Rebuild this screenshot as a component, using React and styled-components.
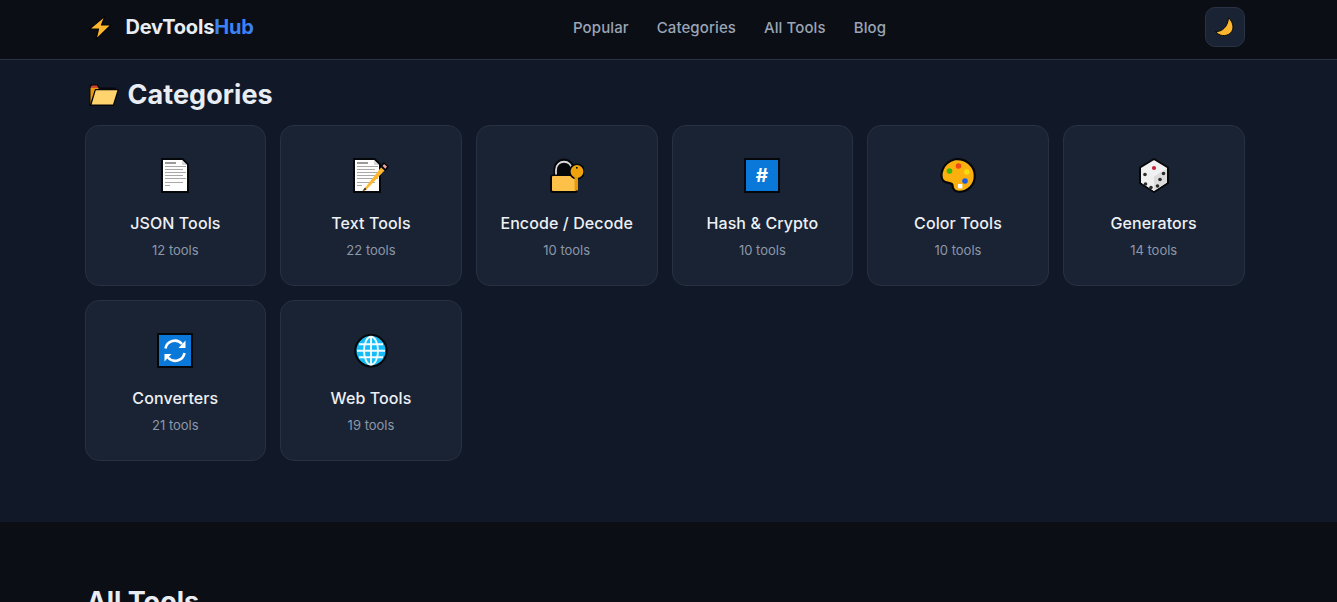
import React from "react";
import styled, { createGlobalStyle } from "styled-components";

const Global = createGlobalStyle`
  html, body { margin: 0; padding: 0; background: #0b0e15; height: 602px; overflow: hidden; }
  body { font-family: Inter, "Noto Sans", sans-serif; color: #e8ecf3; }
  * { box-sizing: border-box; }
`;
const Header = styled.header`
  height: 60px;
  padding-right: 8px;
  background: #0b0e15;
  border-bottom: 1px solid #2a3344;
`;
const Container = styled.div`
  max-width: 1192px;
  margin: 0 auto;
  padding: 0 16px;
`;
const Bar = styled(Container)`
  height: 54px;
  display: flex;
  align-items: center;
  justify-content: space-between;
`;
const Logo = styled.a`
  display: flex;
  align-items: center;
  gap: 14px;
  font-size: 20px;
  font-weight: 700;
  letter-spacing: -0.2px;
  color: #e8ecf3;
  padding-left: 3px;
`;
const Accent = styled.span`
  color: #3b82f6;
`;
const Nav = styled.nav`
  display: flex;
  gap: 28px;
  padding-left: 1px;
  font-size: 15px;
  font-weight: 500;
  letter-spacing: 0.1px;
  color: #9aa5b5;
`;
const ThemeButton = styled.button`
  width: 40px;
  height: 40px;
  border-radius: 10px;
  border: 1px solid #2a3344;
  background: #1a2333;
  padding: 0;
  display: flex;
  align-items: center;
  justify-content: center;
`;
const Section = styled.section`
  background: #111827;
  height: 462px;
  padding: 16px 8px 0 0;
`;
const Title = styled.h2`
  margin: 0 0 11px;
  font-size: 27px;
  line-height: 38px;
  font-weight: 700;
  letter-spacing: 0.05px;
  color: #e8ecf3;
  display: flex;
  align-items: center;
  gap: 9px;
  padding-left: 4px;
`;
const Grid = styled.div`
  display: grid;
  grid-template-columns: repeat(6, 1fr);
  gap: 14px;
`;
const Card = styled.a`
  height: 161px;
  background: #1a2333;
  border: 1px solid #273142;
  border-radius: 14px;
  display: flex;
  flex-direction: column;
  align-items: center;
  padding-top: 32px;
`;
const CardIcon = styled.div`
  height: 35px;
  display: flex;
  align-items: flex-start;
  justify-content: center;
`;
const CardName = styled.div`
  margin-top: 18px;
  font-size: 16px;
  font-weight: 500;
  letter-spacing: 0.1px;
  line-height: 24px;
  color: #edf0f5;
`;
const CardCount = styled.div`
  margin-top: 5px;
  font-size: 13px;
  line-height: 20px;
  color: #8c98aa;
`;
const Tools = styled.section`
  padding: 64px 8px 0 0;
`;
const ToolsTitle = styled.h2`
  margin: 0;
  padding-left: 2px;
  font-size: 27px;
  line-height: 32px;
  font-weight: 700;
  color: #e8ecf3;
`;

const K = "#05070b";
const Svg = ({ w, h, children }) => (
  <svg width={w} height={h} viewBox={`0 0 ${w} ${h}`} style={{ display: "block" }}>
    {children}
  </svg>
);

const Bolt = () => (
  <Svg w={24} h={25}>
    <path d="M17 1 L1.5 14 H10.5 L8 24.5 L23 10 H13.5 Z" fill="#fdb72e" stroke={K} strokeWidth="1.2" strokeLinejoin="round" />
  </Svg>
);
const Folder = () => (
  <Svg w={30} h={22}>
    <path d="M0.5 21.5 V2.5 Q0.5 0.5 2.5 0.5 H8.5 L10.5 3.5 H27 V6 H9 L5 21.5 Z" fill={K} />
    <path d="M1.5 20.5 V4 H9.5 V6 H6 L3 20.5 Z" fill="#e89a0c" />
    <path d="M1.5 4 Q1.5 1.5 3.5 1.5 H8 L9.5 4 Z" fill="#d0472a" />
    <path d="M6 5 H30 L24.8 22 H0.5 Z" fill={K} />
    <path d="M6.8 6.2 H28.4 L24 20.6 H2.6 Z" fill="#ffd36e" />
  </Svg>
);
const Moon = () => (
  <Svg w={19} h={20}>
    <path d="M13.5 0.8 C18.6 5.5 19.4 12 15.6 16 C11 20 3.8 19.2 0.6 14.4 C7 15 12.8 10 13.5 0.8 Z" fill="#fdb72e" stroke={K} strokeWidth="1" strokeLinejoin="round" />
  </Svg>
);
const lineRows = [8, 11, 14, 17, 20, 24, 27];
const Lines = () => (
  <>
    <rect x={4} y={4} width={11} height={2} fill="#9a9a9a" />
    {lineRows.map((y, i) => (
      <rect key={y} x={4} y={y} width={i === 6 ? 5 : i % 2 ? 18 : 21} height={1} fill="#a8a8a8" />
    ))}
  </>
);
const Page = ({ pencil }) => (
  <Svg w={pencil ? 36 : 28} h={35}>
    <path d="M0 0 H22 L28 6 V35 H0 Z" fill={K} />
    <path d="M2 2 H21 L26 7 V33 H2 Z" fill="#fdfdfd" />
    <path d="M21 2 L26 7 H21 Z" fill="#d9d9d9" />
    <Lines />
    {pencil && (
      <>
        <path d="M9.5 33 L28 9.5 L31.5 12.5 L12 33 Z" fill="#fdb72e" />
        <path d="M9.5 33 L12 29.5 L13.5 31.5 Z" fill="#333" />
        <path d="M28.5 8 L31 5 L35 8.5 L32.5 12 Z" fill="#e9a3a0" stroke={K} strokeWidth="1.5" />
      </>
    )}
  </Svg>
);
const Lock = () => (
  <Svg w={34} h={35}>
    <path d="M3.5 19 V12 C3.5 -3.5 24.5 -3.5 24.5 12 V19 Z" fill={K} />
    <path d="M6 19 V12 C6 1 22 1 22 12" fill="none" stroke="#d9d9d9" strokeWidth="1.8" />
    <rect x="0" y="16.5" width="28" height="18.5" rx="3" fill={K} />
    <rect x="2" y="18" width="24" height="15" rx="1" fill="#fdc048" />
    <circle cx="27" cy="13.5" r="7.2" fill="#efa20c" stroke={K} strokeWidth="1.6" />
    <rect x="24.6" y="19" width="3.4" height="13.5" fill="#e59a0a" />
    <rect x="26" y="9" width="1.6" height="1.6" fill={K} />
  </Svg>
);
const HashText = styled.text`
  font-family: Inter, sans-serif;
  font-size: 19px;
  font-weight: 700;
  fill: #fff;
`;
const Hash = () => (
  <Svg w={36} h={35}>
    <rect width="36" height="35" fill={K} />
    <rect x="2" y="2" width="32" height="31" fill="#0a78d8" />
    <HashText x="18" y="24" textAnchor="middle">#</HashText>
  </Svg>
);
const Palette = () => (
  <Svg w={36} h={35}>
    <path d="M15 1.2 C26 0 34.8 8 34.8 18 C34.8 27 28 33.8 19 33.8 C14 33.8 12.5 30 12.5 27 C11.5 24 6 26 3 22.5 C0 18 1 5 15 1.2 Z" fill="#fbb00e" stroke={K} strokeWidth="2.2" strokeLinejoin="round" />
    <circle cx="9.5" cy="13" r="2.8" fill="#38b80f" />
    <circle cx="18.5" cy="8" r="2.8" fill="#ee4a18" />
    <circle cx="26.8" cy="14" r="2.8" fill="#f6dc10" />
    <circle cx="25" cy="23" r="2.8" fill="#1a5ce8" />
    <rect x="18" y="26" width="4.4" height="4.4" fill="#fff" />
  </Svg>
);
const Dice = () => (
  <Svg w={30} h={35}>
    <path d="M15 1 L29 9.5 V25 L15 34 L1 25 V9.5 Z" fill="#f1f1f1" stroke={K} strokeWidth="2" strokeLinejoin="round" />
    <path d="M15 18.5 L28 10.5 V24.5 L15 33 Z" fill="#dcdcdc" />
    <path d="M15 18.5 L2 10.5 V24.5 L15 33 Z" fill="#efefef" />
    <circle cx="15" cy="10" r="2.1" fill="#c4203a" />
    {[[6, 16.5], [6.5, 26], [12, 29.5], [24.5, 15.5], [21, 21.5], [18.5, 28]].map(([x, y]) => (
      <circle key={x + "-" + y} cx={x} cy={y} r="1.8" fill="#2c2c2c" />
    ))}
  </Svg>
);
const Refresh = () => (
  <Svg w={36} h={35}>
    <rect width="36" height="35" fill={K} />
    <rect x="2" y="2" width="32" height="31" fill="#0a78d8" />
    <path d="M8.5 15.5 A9.5 9.5 0 0 1 25 11" fill="none" stroke="#fff" strokeWidth="2.6" />
    <path d="M27.5 20 A9.5 9.5 0 0 1 11 24.5" fill="none" stroke="#fff" strokeWidth="2.6" />
    <path d="M28.5 7.5 V15 H21.5 Z" fill="#fff" />
    <path d="M7.5 28.5 V21 H14.5 Z" fill="#fff" />
  </Svg>
);
const Globe = () => (
  <Svg w={34} h={35}>
    <circle cx="17" cy="17.7" r="16.7" fill={K} />
    <circle cx="17" cy="17.7" r="14.6" fill="#14bdf7" />
    <g fill="none" stroke="#f0fbff" strokeWidth="1.9">
      <ellipse cx="17" cy="17.7" rx="7" ry="14" />
      <path d="M17 3.7 V31.7 M3 17.7 H31 M5 11.2 H29 M5 24.2 H29" />
    </g>
  </Svg>
);

const cats = [
  [<Page key="a" />, "JSON Tools", 12],
  [<Page key="b" pencil />, "Text Tools", 22],
  [<Lock key="c" />, "Encode / Decode", 10],
  [<Hash key="d" />, "Hash & Crypto", 10],
  [<Palette key="e" />, "Color Tools", 10],
  [<Dice key="f" />, "Generators", 14],
  [<Refresh key="g" />, "Converters", 21],
  [<Globe key="h" />, "Web Tools", 19],
];

export default function App() {
  return (
    <>
      <Global />
      <Header>
        <Bar>
          <Logo>
            <Bolt />
            <span>DevTools<Accent>Hub</Accent></span>
          </Logo>
          <Nav>
            <span>Popular</span>
            <span>Categories</span>
            <span>All Tools</span>
            <span>Blog</span>
          </Nav>
          <ThemeButton aria-label="Toggle theme"><Moon /></ThemeButton>
        </Bar>
      </Header>
      <Section>
        <Container>
          <Title><Folder /> Categories</Title>
          <Grid>
            {cats.map(([icon, name, n]) => (
              <Card key={name}>
                <CardIcon>{icon}</CardIcon>
                <CardName>{name}</CardName>
                <CardCount>{n} tools</CardCount>
              </Card>
            ))}
          </Grid>
        </Container>
      </Section>
      <Tools>
        <Container>
          <ToolsTitle>All Tools</ToolsTitle>
        </Container>
      </Tools>
    </>
  );
}
